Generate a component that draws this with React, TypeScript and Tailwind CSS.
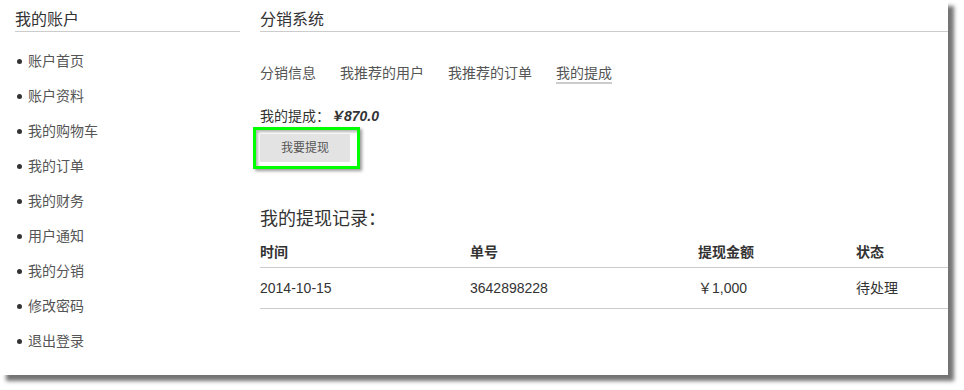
const menu = ["账户首页", "账户资料", "我的购物车", "我的订单", "我的财务", "用户通知", "我的分销", "修改密码", "退出登录"];
const tabs = ["分销信息", "我推荐的用户", "我推荐的订单", "我的提成"];

const App = () => {
    return (
        <div className="w-[964px] h-[390px] bg-white font-['Liberation_Sans','Noto_Sans_CJK_SC',sans-serif] text-[#333]">
            <div className="w-[948px] h-[375px] bg-white shadow-[6px_6px_4px_rgba(0,0,0,0.55)] flex pl-[15px] pt-2">
                {/* sidebar */}
                <div className="w-[225px] shrink-0">
                    <div className="h-6 leading-6 text-[16px] border-b border-[#ccc]">我的账户</div>
                    <ul className="mt-[12px]">
                        {menu.map((m) => (
                            <li key={m} className="h-[35px] flex items-center text-[14px] text-[#555]">
                                <span className="w-[5px] h-[5px] rounded-full bg-[#333] ml-[2px] mr-[6px]"></span>
                                {m}
                            </li>
                        ))}
                    </ul>
                </div>

                {/* main */}
                <div className="ml-5 flex-1">
                    <div className="h-6 leading-6 text-[16px] border-b border-[#ccc]">分销系统</div>
                    <div className="flex mt-[32px] text-[14px] text-[#555]">
                        {tabs.map((t, i) => (
                            <span
                                key={t}
                                className={
                                    i === tabs.length - 1
                                        ? "leading-[18px] border-b-2 border-[#ccc]"
                                        : "leading-[18px] mr-6 border-b-2 border-transparent"
                                }
                            >
                                {t}
                            </span>
                        ))}
                    </div>
                    <div className="mt-[22px] text-[14px] leading-5">
                        我的提成：<span className="font-bold italic">￥870.0</span>
                    </div>
                    <div className="-ml-[7px] mt-[1px] w-[107px] h-[42px] border-[3px] border-[#00ff00] p-[4px] shadow-[2px_2px_3px_rgba(0,0,0,0.4),inset_2px_2px_3px_rgba(0,0,0,0.3)]">
                        <button className="w-[90px] h-[28px] bg-[#e3e3e3] text-[12px] text-[#555]">我要提现</button>
                    </div>
                    <div className="mt-[38px] text-[18px] leading-6">我的提现记录：</div>
                    <div className="mt-[6px] text-[14px]">
                        <div className="flex h-[31px] items-center font-bold border-b border-[#ccc]">
                            <span className="w-[210px]">时间</span>
                            <span className="w-[228px]">单号</span>
                            <span className="w-[158px]">提现金额</span>
                            <span>状态</span>
                        </div>
                        <div className="flex h-[41px] items-center border-b border-[#ccc]">
                            <span className="w-[210px]">2014-10-15</span>
                            <span className="w-[228px]">3642898228</span>
                            <span className="w-[158px]">￥1,000</span>
                            <span>待处理</span>
                        </div>
                    </div>
                </div>
            </div>
        </div>
    );
};

export default App;
